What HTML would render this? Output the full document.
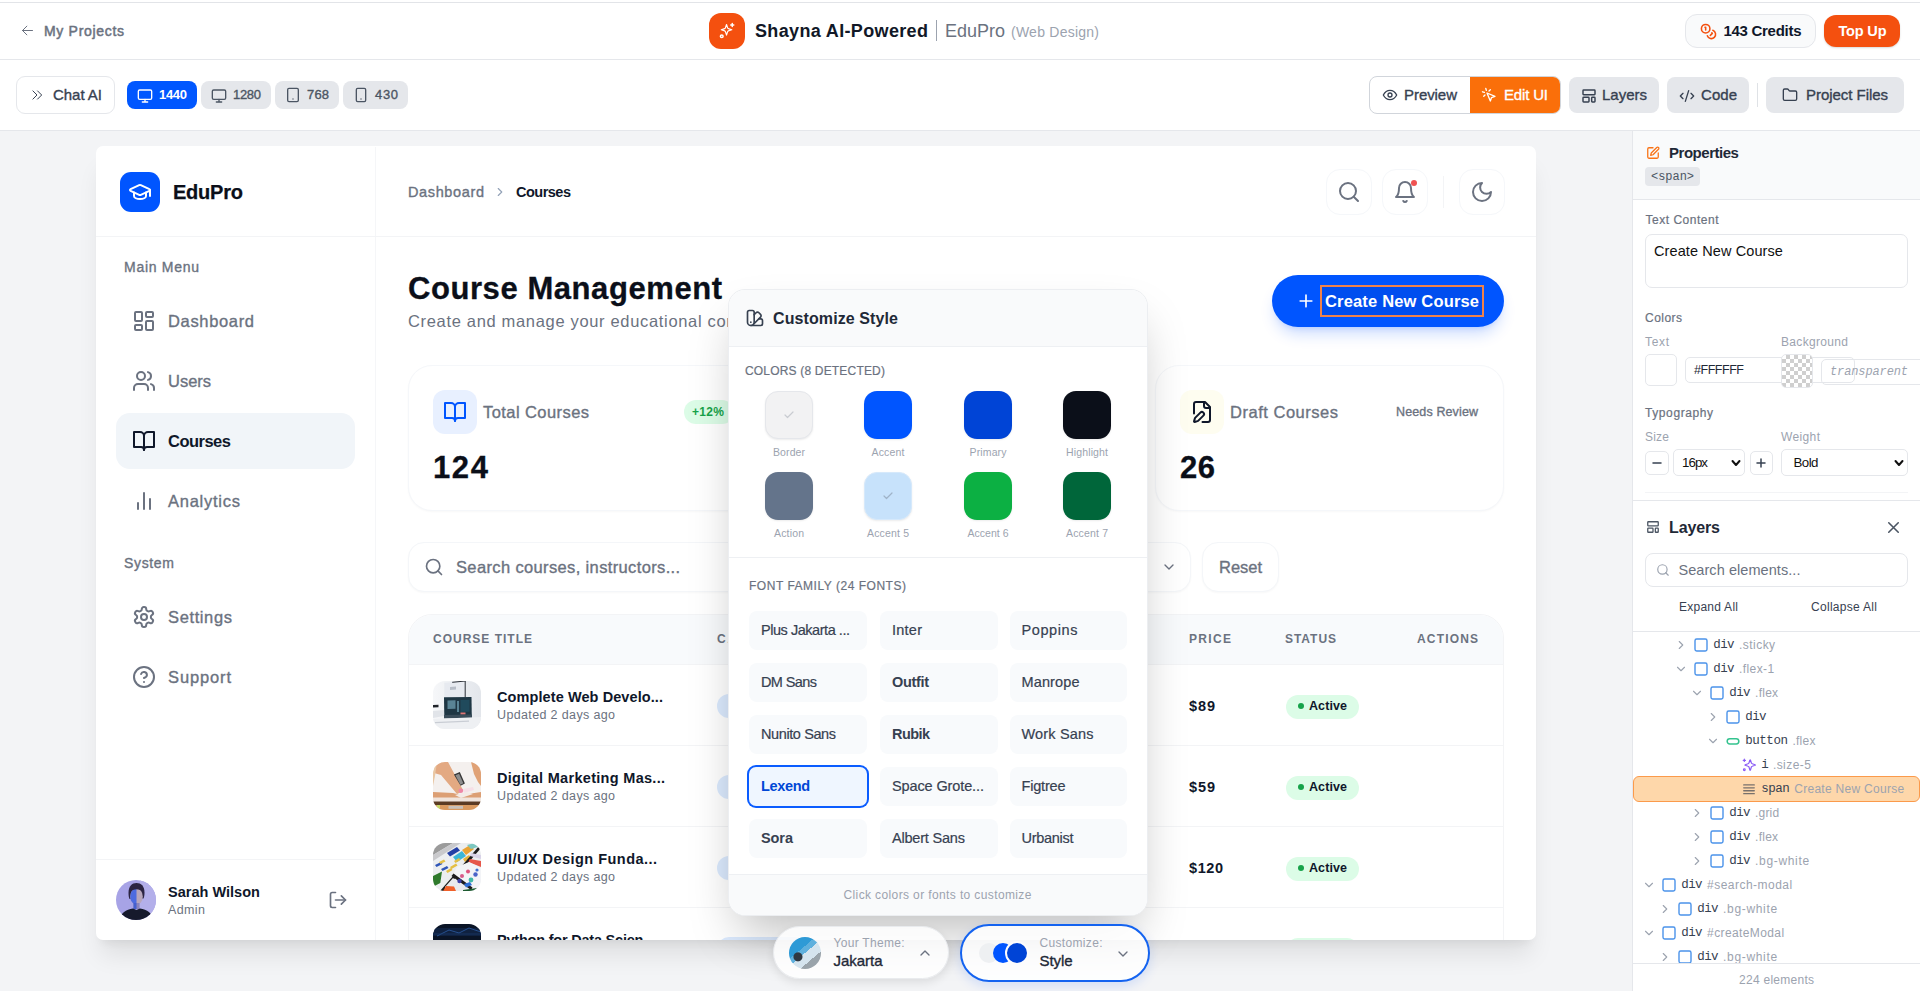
<!DOCTYPE html>
<html lang="en">
<head>
<meta charset="utf-8">
<title>Shayna AI-Powered | EduPro</title>
<style>
*{box-sizing:border-box;margin:0;padding:0}
html,body{width:1920px;height:991px;overflow:hidden;background:#f3f4f6;font-family:"Liberation Sans",Arial,sans-serif;color:#111827}
body{position:relative}
.abs{position:absolute}
.t{position:absolute;white-space:nowrap;line-height:1;transform:translateY(-50%)}
svg{display:block}
.ic{position:absolute;fill:none;stroke:currentColor;stroke-width:2;stroke-linecap:round;stroke-linejoin:round}
/* ---------- app chrome ---------- */
#hdr{position:absolute;left:0;top:0;width:1920px;height:60px;background:#fff;border-bottom:1px solid #e5e7eb}
#topline{position:absolute;left:0;top:2px;width:1920px;height:1px;background:#e2e4e8}
#tool{position:absolute;left:0;top:60px;width:1920px;height:71px;background:#fff;border-bottom:1px solid #e5e7eb}
.btn{position:absolute;border-radius:8px}
.chip{position:absolute;top:21px;height:28px;border-radius:8px;background:#e5e7eb;color:#374151}
.gbtn{position:absolute;top:17px;height:36px;border-radius:8px;background:#e5e7eb;color:#374151}
/* ---------- canvas ---------- */
#canvas{position:absolute;left:0;top:131px;width:1633px;height:860px;background:#f3f4f6;overflow:hidden}
#frame{position:absolute;left:96px;top:15px;width:1440px;height:794px;background:#fff;border-radius:7px;box-shadow:0 20px 25px -5px rgba(0,0,0,.085),0 8px 10px -6px rgba(0,0,0,.07);overflow:hidden}
/* ---------- right panel ---------- */
#right{position:absolute;left:1632px;top:131px;width:288px;height:860px;background:#fff;border-left:1px solid #e5e7eb;overflow:hidden}

.card{border-radius:24px;border:1px solid #f5f7fa;background:#fff;box-shadow:0 1px 2px rgba(15,23,42,.03)}
.th{font-size:12px;font-weight:bold;color:#6b7280}
.thumb{width:48px;height:48px;border-radius:12px}
.rt{font-size:14.5px;font-weight:bold;color:#0f172a}
.rs{font-size:12.5px;color:#6b7280}
.pr{font-size:14.5px;font-weight:bold;color:#0f172a}
.pill{width:90px;height:24px;border-radius:12px;background:#dbeafe}
.st{width:73px;height:24px;margin-left:1px;margin-top:.5px;border-radius:12px;background:#dcfce7}
.dot{width:6px;height:6px;border-radius:50%;background:#16a34a;margin-top:-1px}
.sa{font-size:12.5px;font-weight:bold;color:#0f172a}

.mono{font-family:"Liberation Mono","DejaVu Sans Mono",monospace}
.lab{font-size:12px;color:#6b7280}
.lab2{font-size:12px;color:#9ca3af}
.sb{border:1px solid #e5e7eb;border-radius:5px;background:#fff}
.m{-webkit-text-stroke:.35px currentColor}
.m2{-webkit-text-stroke:.2px currentColor}
</style>
</head>
<body>
<!-- ================= HEADER ================= -->
<div id="hdr">
  <svg class="ic" style="left:20px;top:23px;color:#6b7280;stroke-width:1.6" width="15" height="15" viewBox="0 0 24 24"><path d="M20 12H4M11 5l-7 7 7 7"/></svg>
  <span class="t" style="left:44px;top:31px;font-size:14px;color:#6b7280;-webkit-text-stroke:.5px #6b7280;letter-spacing:0.69px;/*f*/--w:80">My Projects</span>

  <div class="abs" style="left:709px;top:13px;width:36px;height:36px;border-radius:12px;background:#f4500f"></div>
  <svg class="ic" style="left:718px;top:22px;color:#fff;stroke-width:2" width="18" height="18" viewBox="0 0 24 24"><path d="M12 3l1.9 5.8a2 2 0 0 0 1.3 1.3L21 12l-5.8 1.9a2 2 0 0 0-1.3 1.3L12 21l-1.9-5.8a2 2 0 0 0-1.3-1.3L3 12l5.8-1.9a2 2 0 0 0 1.3-1.3z" transform="translate(2 1) scale(.78)"/><path d="M19 2v4M17 4h4"/><circle cx="5" cy="19" r="1.8"/></svg>
  <span class="t" style="left:755px;top:31px;font-size:18px;font-weight:bold;color:#111827;letter-spacing:0.35px;/*f*/--w:173">Shayna AI-Powered</span>
  <div class="abs" style="left:936px;top:20px;width:1px;height:21px;background:#9ca3af"></div>
  <span class="t" style="left:945px;top:31px;font-size:18px;color:#6b7280;letter-spacing:-0.01px;/*f*/--w:60">EduPro</span>
  <span class="t" style="left:1011px;top:32px;font-size:14px;color:#9ca3af;letter-spacing:0.24px;/*f*/--w:88">(Web Design)</span>

  <div class="abs" style="left:1685px;top:14px;width:131px;height:34px;border-radius:12px;background:#f9fafb;border:1px solid #e5e7eb"></div>
  <svg class="ic" style="left:1699.5px;top:22.5px;color:#f4500f;stroke-width:2.2" width="17" height="17" viewBox="0 0 24 24"><circle cx="8" cy="8" r="6"/><path d="M18.09 10.37A6 6 0 1 1 10.34 18"/><path d="M7 6h1v4"/><path d="M16.71 13.88l.7.71-2.82 2.82"/></svg>
  <span class="t" style="left:1723.5px;top:30.4px;font-size:15px;font-weight:bold;color:#0f172a;letter-spacing:-0.29px;/*f*/--w:78">143 Credits</span>
  <div class="abs" style="left:1824px;top:15px;width:76px;height:32px;border-radius:12px;background:#f4500f;box-shadow:0 1px 2px rgba(0,0,0,.15)"></div>
  <span class="t" style="left:1838.5px;top:30.5px;font-size:14.5px;font-weight:bold;color:#fff;letter-spacing:-0.17px;/*f*/--w:48">Top Up</span>
</div>
<div id="topline"></div>

<!-- ================= TOOLBAR ================= -->
<div id="tool">
  <div class="btn" style="left:16px;top:16px;width:99px;height:38px;border:1px solid #e5e7eb;border-radius:9px;background:#fff"></div>
  <svg class="ic" style="left:30px;top:28px;color:#374151;stroke-width:1.7" width="14" height="14" viewBox="0 0 24 24"><path d="M5 5l7 7-7 7M13 5l7 7-7 7"/></svg>
  <span class="t m" style="left:53px;top:34.2px;font-size:15px;color:#374151;letter-spacing:-0.03px;/*f*/--w:49">Chat AI</span>

  <div class="chip" style="left:127px;width:70px;background:#0057ff"></div>
  <svg class="ic" style="left:136.5px;top:27.5px;color:#fff;stroke-width:2" width="16" height="16" viewBox="0 0 24 24"><rect x="2" y="3" width="20" height="14" rx="2"/><path d="M8 21h8M12 17v4"/></svg>
  <span class="t" style="left:159px;top:34.2px;font-size:13px;color:#fff;font-weight:bold;letter-spacing:-0.31px;/*f*/--w:28">1440</span>

  <div class="chip" style="left:201px;width:70px"></div>
  <svg class="ic" style="left:210.5px;top:27.5px;color:#4b5563;stroke-width:2" width="16" height="16" viewBox="0 0 24 24"><rect x="2" y="3" width="20" height="14" rx="2"/><path d="M8 21h8M12 17v4"/></svg>
  <span class="t m" style="left:233px;top:34.2px;font-size:13px;color:#4b5563;letter-spacing:-0.31px;/*f*/--w:28">1280</span>

  <div class="chip" style="left:275px;width:64px"></div>
  <svg class="ic" style="left:285px;top:27px;color:#4b5563;stroke-width:2" width="16" height="16" viewBox="0 0 24 24"><rect x="4" y="2" width="16" height="20" rx="2"/><path d="M12 18h.01"/></svg>
  <span class="t m" style="left:307px;top:34.2px;font-size:13px;color:#4b5563;letter-spacing:0.15px;/*f*/--w:22">768</span>

  <div class="chip" style="left:343px;width:65px"></div>
  <svg class="ic" style="left:353px;top:27px;color:#4b5563;stroke-width:2" width="16" height="16" viewBox="0 0 24 24"><rect x="5" y="2" width="14" height="20" rx="2"/><path d="M12 18h.01"/></svg>
  <span class="t m" style="left:375px;top:34.2px;font-size:13px;color:#4b5563;letter-spacing:0.65px;/*f*/--w:23">430</span>

  <!-- preview / edit -->
  <div class="abs" style="left:1369px;top:16px;width:192px;height:38px;border:1px solid #d1d5db;border-radius:8px;background:#fff;overflow:hidden">
    <div class="abs" style="left:100px;top:-1px;width:91px;height:38px;background:#fa6f0a"></div>
  </div>
  <svg class="ic" style="left:1382px;top:27px;color:#374151;stroke-width:2" width="16" height="16" viewBox="0 0 24 24"><path d="M2 12s3.6-7 10-7 10 7 10 7-3.6 7-10 7S2 12 2 12z"/><circle cx="12" cy="12" r="3"/></svg>
  <span class="t m" style="left:1404px;top:34.2px;font-size:15px;color:#374151;letter-spacing:-0.06px;/*f*/--w:53">Preview</span>
  <svg class="ic" style="left:1481px;top:27px;color:#fff;stroke-width:2" width="16" height="16" viewBox="0 0 24 24"><path d="M9 9l5 12 1.8-5.2L21 14zM7.2 2.2L8 5.1M5.1 8l-2.9-.8M14 4.1L12 6M6 12l-1.9 2"/></svg>
  <span class="t m" style="left:1504px;top:34.2px;font-size:15px;color:#fff;letter-spacing:-0.17px;/*f*/--w:44">Edit UI</span>

  <div class="gbtn" style="left:1569px;width:90px"></div>
  <svg class="ic" style="left:1580.5px;top:27.5px;color:#374151;stroke-width:2.2" width="16" height="16" viewBox="0 0 24 24"><rect x="3" y="3" width="18" height="7" rx="1"/><rect x="3" y="14" width="9" height="7" rx="1"/><rect x="16" y="14" width="5" height="7" rx="1"/></svg>
  <span class="t m" style="left:1602px;top:34.2px;font-size:15px;color:#374151;letter-spacing:-0.01px;/*f*/--w:45">Layers</span>

  <div class="gbtn" style="left:1667px;width:82px"></div>
  <svg class="ic" style="left:1678.5px;top:27.5px;color:#374151;stroke-width:2" width="16" height="16" viewBox="0 0 24 24"><path d="M18 16l4-4-4-4M6 8l-4 4 4 4M14.5 4l-5 16"/></svg>
  <span class="t m" style="left:1701px;top:34.2px;font-size:15px;color:#374151;letter-spacing:0.05px;/*f*/--w:36">Code</span>

  <div class="abs" style="left:1757px;top:23px;width:1px;height:24px;background:#dfe2e6"></div>

  <div class="gbtn" style="left:1766px;width:138px"></div>
  <svg class="ic" style="left:1782px;top:27px;color:#374151;stroke-width:2" width="16" height="16" viewBox="0 0 24 24"><path d="M20 20a2 2 0 0 0 2-2V8a2 2 0 0 0-2-2h-7.9a2 2 0 0 1-1.7-.9L9.6 3.9A2 2 0 0 0 7.9 3H4a2 2 0 0 0-2 2v13a2 2 0 0 0 2 2z"/></svg>
  <span class="t m" style="left:1806px;top:34.2px;font-size:15px;color:#374151;letter-spacing:-0.04px;/*f*/--w:82">Project Files</span>
</div>

<!-- ================= CANVAS ================= -->
<div id="canvas">
  <div id="frame">
  <div class="abs" id="fo" style="left:-96px;top:-146px;width:1920px;height:991px;font-family:'Liberation Sans',Arial,sans-serif">
    <!-- sidebar -->
    <div class="abs" style="left:375px;top:147px;width:1px;height:800px;background:#f5f6f8"></div>
    <div class="abs" style="left:96px;top:236px;width:1440px;height:1px;background:#f3f4f6"></div>
    <div class="abs" style="left:120px;top:172px;width:40px;height:40px;border-radius:11px;background:#0055ff"></div>
    <svg class="ic" style="left:128px;top:180px;color:#fff;stroke-width:2" width="24" height="24" viewBox="0 0 24 24"><path d="M21.42 10.922a1 1 0 0 0-.019-1.838L12.83 5.18a2 2 0 0 0-1.66 0L2.6 9.08a1 1 0 0 0 0 1.832l8.57 3.908a2 2 0 0 0 1.66 0z"/><path d="M22 10v6"/><path d="M6 12.5V16a6 3 0 0 0 12 0v-3.5"/></svg>
    <span class="t" style="left:173px;top:192px;font-size:20px;font-weight:bold;color:#0b0f19;-webkit-text-stroke:.25px #0b0f19;letter-spacing:-0.23px;/*f*/--w:70">EduPro</span>

    <span class="t m" style="left:124px;top:267px;font-size:14px;color:#6b7280;letter-spacing:0.72px;/*f*/--w:75">Main Menu</span>

    <svg class="ic" style="left:132px;top:309px;color:#6b7280" width="24" height="24" viewBox="0 0 24 24"><rect x="3" y="3" width="7" height="9" rx="1"/><rect x="14" y="3" width="7" height="5" rx="1"/><rect x="14" y="12" width="7" height="9" rx="1"/><rect x="3" y="16" width="7" height="5" rx="1"/></svg>
    <span class="t m" style="left:168px;top:321px;font-size:16.5px;color:#6b7280;letter-spacing:0.66px;/*f*/--w:86">Dashboard</span>

    <svg class="ic" style="left:132px;top:369px;color:#6b7280" width="24" height="24" viewBox="0 0 24 24"><path d="M16 21v-2a4 4 0 0 0-4-4H6a4 4 0 0 0-4 4v2"/><circle cx="9" cy="7" r="4"/><path d="M22 21v-2a4 4 0 0 0-3-3.87"/><path d="M16 3.13a4 4 0 0 1 0 7.75"/></svg>
    <span class="t m" style="left:168px;top:381px;font-size:16.5px;color:#6b7280;letter-spacing:-0.02px;/*f*/--w:43">Users</span>

    <div class="abs" style="left:116px;top:413px;width:239px;height:56px;border-radius:14px;background:#f1f5f9"></div>
    <svg class="ic" style="left:132px;top:429px;color:#0f172a" width="24" height="24" viewBox="0 0 24 24"><path d="M2 3h6a4 4 0 0 1 4 4v14a3 3 0 0 0-3-3H2z"/><path d="M22 3h-6a4 4 0 0 0-4 4v14a3 3 0 0 1 3-3h7z"/></svg>
    <span class="t" style="left:168px;top:441px;font-size:16.5px;font-weight:bold;color:#0f172a;letter-spacing:-0.51px;/*f*/--w:63">Courses</span>

    <svg class="ic" style="left:132px;top:489px;color:#6b7280" width="24" height="24" viewBox="0 0 24 24"><path d="M18 20V10M12 20V4M6 20v-6"/></svg>
    <span class="t m" style="left:168px;top:501px;font-size:16.5px;color:#6b7280;letter-spacing:0.75px;/*f*/--w:72">Analytics</span>

    <span class="t m" style="left:124px;top:563px;font-size:14px;color:#6b7280;letter-spacing:0.66px;/*f*/--w:50">System</span>

    <svg class="ic" style="left:132px;top:605px;color:#6b7280" width="24" height="24" viewBox="0 0 24 24"><path d="M12.22 2h-.44a2 2 0 0 0-2 2v.18a2 2 0 0 1-1 1.73l-.43.25a2 2 0 0 1-2 0l-.15-.08a2 2 0 0 0-2.73.73l-.22.38a2 2 0 0 0 .73 2.73l.15.1a2 2 0 0 1 1 1.72v.51a2 2 0 0 1-1 1.74l-.15.09a2 2 0 0 0-.73 2.73l.22.38a2 2 0 0 0 2.73.73l.15-.08a2 2 0 0 1 2 0l.43.25a2 2 0 0 1 1 1.73V20a2 2 0 0 0 2 2h.44a2 2 0 0 0 2-2v-.18a2 2 0 0 1 1-1.73l.43-.25a2 2 0 0 1 2 0l.15.08a2 2 0 0 0 2.73-.73l.22-.39a2 2 0 0 0-.73-2.73l-.15-.08a2 2 0 0 1-1-1.74v-.5a2 2 0 0 1 1-1.74l.15-.09a2 2 0 0 0 .73-2.73l-.22-.38a2 2 0 0 0-2.73-.73l-.15.08a2 2 0 0 1-2 0l-.43-.25a2 2 0 0 1-1-1.73V4a2 2 0 0 0-2-2z"/><circle cx="12" cy="12" r="3"/></svg>
    <span class="t m" style="left:168px;top:617px;font-size:16.5px;color:#6b7280;letter-spacing:0.62px;/*f*/--w:64">Settings</span>

    <svg class="ic" style="left:132px;top:665px;color:#6b7280" width="24" height="24" viewBox="0 0 24 24"><circle cx="12" cy="12" r="10"/><path d="M9.09 9a3 3 0 0 1 5.83 1c0 2-3 3-3 3"/><path d="M12 17h.01"/></svg>
    <span class="t m" style="left:168px;top:677px;font-size:16.5px;color:#6b7280;letter-spacing:0.87px;/*f*/--w:63">Support</span>

    <div class="abs" style="left:96px;top:859px;width:279px;height:1px;background:#f3f4f6"></div>
    <svg class="abs" style="left:116px;top:880px;border-radius:50%;overflow:hidden" width="40" height="40" viewBox="0 0 40 40"><rect width="40" height="40" fill="#a7a3e6"/><path d="M24 0h16v40H24z" fill="#b3afea"/><path d="M12.500 13c0-7 3.500-10 8-10s8 3 8 9.500c0 3-.5 5-1 6l-14 .5c-.6-1.500-1-3.500-1-6z" fill="#2b2443"/><ellipse cx="20.500" cy="16.500" rx="6.300" ry="8.300" fill="#b7a6bb"/><path d="M14.200 16.500a6.300 8.300 0 0 1 6.300-8.300v16.600a6.300 8.300 0 0 1-6.300-8.300z" fill="#4d6be0"/><path d="M14 12c1-3.500 3.500-5 6.500-5s5.500 1.500 6.500 5c-2-2-4-2.800-6.500-2.800S16 10 14 12z" fill="#2b2443"/><path d="M17.500 23h6v6h-6z" fill="#8a83bb"/><path d="M17.500 23h3v6h-3z" fill="#4560cf"/><path d="M4 40c.5-7 6-10.500 13-11.500l3.500 1.500 3.500-1.500c7 1 12.500 4.500 13 11.500z" fill="#161a2c"/></svg>
    <span class="t" style="left:168px;top:892px;font-size:14.5px;font-weight:bold;color:#0f172a;letter-spacing:0.02px;/*f*/--w:92">Sarah Wilson</span>
    <span class="t" style="left:168px;top:910px;font-size:12.5px;color:#6b7280;letter-spacing:0.39px;/*f*/--w:37">Admin</span>
    <svg class="ic" style="left:328px;top:890px;color:#6b7280;stroke-width:2" width="20" height="20" viewBox="0 0 24 24"><path d="M9 21H5a2 2 0 0 1-2-2V5a2 2 0 0 1 2-2h4"/><path d="M16 17l5-5-5-5"/><path d="M21 12H9"/></svg>

    <!-- top bar -->
    <span class="t m" style="left:408px;top:192px;font-size:14.5px;color:#6b7280;letter-spacing:0.63px;/*f*/--w:76">Dashboard</span>
    <svg class="ic" style="left:493px;top:185px;color:#94a3b8;stroke-width:2" width="14" height="14" viewBox="0 0 24 24"><path d="M9 18l6-6-6-6"/></svg>
    <span class="t" style="left:516px;top:192px;font-size:14.5px;font-weight:bold;color:#0f172a;letter-spacing:-0.51px;/*f*/--w:55">Courses</span>

    <div class="abs" style="left:1326px;top:169px;width:46px;height:46px;border-radius:14px;border:1px solid #f5f7fa;background:#fff"></div>
    <svg class="ic" style="left:1337px;top:180px;color:#6b7280" width="24" height="24" viewBox="0 0 24 24"><circle cx="11" cy="11" r="8"/><path d="M21 21l-4.3-4.3"/></svg>
    <div class="abs" style="left:1382px;top:169px;width:46px;height:46px;border-radius:14px;border:1px solid #f5f7fa;background:#fff"></div>
    <svg class="ic" style="left:1393px;top:180px;color:#6b7280" width="24" height="24" viewBox="0 0 24 24"><path d="M6 8a6 6 0 0 1 12 0c0 7 3 9 3 9H3s3-2 3-9"/><path d="M10.3 21a1.94 1.94 0 0 0 3.4 0"/></svg>
    <div class="abs" style="left:1411px;top:180px;width:6px;height:6px;border-radius:50%;background:#f05252"></div>
    <div class="abs" style="left:1443px;top:176px;width:1px;height:32px;background:#f3f4f6"></div>
    <div class="abs" style="left:1459px;top:169px;width:46px;height:46px;border-radius:14px;border:1px solid #f5f7fa;background:#fff"></div>
    <svg class="ic" style="left:1470px;top:180px;color:#6b7280" width="24" height="24" viewBox="0 0 24 24"><path d="M12 3a6 6 0 0 0 9 9 9 9 0 1 1-9-9z"/></svg>

    <!-- heading -->
    <span class="t" style="left:408px;top:288px;font-size:31px;font-weight:bold;color:#0b0f19;-webkit-text-stroke:.3px #0b0f19;letter-spacing:0.57px;/*f*/--w:314">Course Management</span>
    <span class="t" style="left:408px;top:321px;font-size:16.5px;color:#6b7280;letter-spacing:0.67px;/*f*/--w:363">Create and manage your educational content.</span>

    <div class="abs" style="left:1272px;top:275px;width:232px;height:52px;border-radius:26px;background:#0055ff;box-shadow:0 10px 15px -3px rgba(0,85,255,.2),0 4px 6px -4px rgba(0,85,255,.2)"></div>
    <svg class="ic" style="left:1296px;top:291px;color:#fff;stroke-width:2" width="20" height="20" viewBox="0 0 24 24"><path d="M5 12h14M12 5v14"/></svg>
    <div class="abs" style="left:1320px;top:285px;width:164px;height:32px;border:2px solid #f0824a;background:rgba(0,30,120,.12)"></div>
    <span class="t" style="left:1325px;top:301px;font-size:16.5px;font-weight:bold;color:#fff;letter-spacing:0.17px;/*f*/--w:154">Create New Course</span>

    <!-- stat cards -->
    <div class="abs card" style="left:408px;top:365px;width:349px;height:146px"></div>
    <div class="abs card" style="left:781px;top:365px;width:349px;height:146px"></div>
    <div class="abs card" style="left:1155px;top:365px;width:349px;height:146px"></div>

    <div class="abs" style="left:433px;top:390px;width:44px;height:44px;border-radius:12px;background:#e8f0ff"></div>
    <svg class="ic" style="left:443px;top:400px;color:#0055ff" width="24" height="24" viewBox="0 0 24 24"><path d="M2 3h6a4 4 0 0 1 4 4v14a3 3 0 0 0-3-3H2z"/><path d="M22 3h-6a4 4 0 0 0-4 4v14a3 3 0 0 1 3-3h7z"/></svg>
    <span class="t m" style="left:483px;top:412px;font-size:16.5px;color:#6b7280;letter-spacing:0.43px;/*f*/--w:106">Total Courses</span>
    <div class="abs" style="left:684px;top:400px;width:50px;height:24px;border-radius:12px;background:#dcfce7"></div>
    <span class="t" style="left:692px;top:412px;font-size:12px;font-weight:bold;color:#16a34a;letter-spacing:0.32px;/*f*/--w:32">+12%</span>
    <span class="t" style="left:433px;top:467px;font-size:31px;font-weight:bold;color:#0b0f19;-webkit-text-stroke:.3px #0b0f19;letter-spacing:1.63px;/*f*/--w:55">124</span>

    <div class="abs" style="left:1180px;top:390px;width:44px;height:44px;border-radius:12px;background:#fefdf0"></div>
    <svg class="ic" style="left:1190px;top:400px;color:#0f172a" width="24" height="24" viewBox="0 0 24 24"><path d="M12.5 22H18a2 2 0 0 0 2-2V7l-5-5H6a2 2 0 0 0-2 2v9.5"/><path d="M14 2v4a2 2 0 0 0 2 2h4"/><path d="M13.378 15.626a1 1 0 1 0-3.004-3.004l-5.01 5.012a2 2 0 0 0-.506.854l-.837 2.87a.5.5 0 0 0 .62.62l2.87-.837a2 2 0 0 0 .854-.506z"/></svg>
    <span class="t m" style="left:1230px;top:412px;font-size:16.5px;color:#6b7280;letter-spacing:0.52px;/*f*/--w:108">Draft Courses</span>
    <span class="t m" style="left:1396px;top:412px;font-size:12.5px;color:#6b7280;letter-spacing:0.13px;/*f*/--w:82">Needs Review</span>
    <span class="t" style="left:1180px;top:467px;font-size:31px;font-weight:bold;color:#0b0f19;-webkit-text-stroke:.3px #0b0f19;letter-spacing:0.52px;/*f*/--w:35">26</span>

    <!-- filters -->
    <div class="abs" style="left:408px;top:542px;width:540px;height:50px;border-radius:16px;border:1px solid #f4f6f9;box-shadow:0 1px 2px rgba(15,23,42,.03);background:#fff"></div>
    <svg class="ic" style="left:424px;top:557px;color:#6b7280;stroke-width:2" width="20" height="20" viewBox="0 0 24 24"><circle cx="11" cy="11" r="8"/><path d="M21 21l-4.3-4.3"/></svg>
    <span class="t m" style="left:456px;top:567px;font-size:16.5px;color:#6b7280;letter-spacing:0.36px;/*f*/--w:224">Search courses, instructors...</span>
    <div class="abs" style="left:960px;top:542px;width:231px;height:50px;border-radius:16px;border:1px solid #f4f6f9;box-shadow:0 1px 2px rgba(15,23,42,.03);background:#fff"></div>
    <svg class="ic" style="left:1161px;top:559px;color:#6b7280;stroke-width:2" width="16" height="16" viewBox="0 0 24 24"><path d="M6 9l6 6 6-6"/></svg>
    <div class="abs" style="left:1202px;top:542px;width:77px;height:50px;border-radius:16px;border:1px solid #f4f6f9;box-shadow:0 1px 2px rgba(15,23,42,.03);background:#fff"></div>
    <span class="t m" style="left:1219px;top:567px;font-size:16.5px;color:#6b7280;letter-spacing:-0.03px;/*f*/--w:43">Reset</span>

    <!-- table -->
    <div class="abs" style="left:408px;top:614px;width:1096px;height:400px;border-radius:24px 24px 0 0;border:1px solid #f3f4f6;background:#fff;overflow:hidden">
      <div class="abs" style="left:0;top:0;width:1096px;height:50px;background:#f8fafc;border-bottom:1px solid #f3f4f6"></div>
      <div class="abs" style="left:0;top:130px;width:1096px;height:1px;background:#f3f4f6"></div>
      <div class="abs" style="left:0;top:211px;width:1096px;height:1px;background:#f3f4f6"></div>
      <div class="abs" style="left:0;top:292px;width:1096px;height:1px;background:#f3f4f6"></div>
    </div>
    <span class="t th" style="left:433px;top:639px;letter-spacing:1.0px;/*f*/--w:99">COURSE TITLE</span>
    <span class="t th" style="left:717px;top:639px;letter-spacing:1.9px;/*f*/--w:80">CATEGORY</span>
    <span class="t th" style="left:1189px;top:639px;letter-spacing:1.33px;/*f*/--w:42">PRICE</span>
    <span class="t th" style="left:1285px;top:639px;letter-spacing:0.96px;/*f*/--w:51">STATUS</span>
    <span class="t th" style="left:1417px;top:639px;letter-spacing:1.17px;/*f*/--w:61">ACTIONS</span>

    <!-- row 1 -->
    <svg class="abs" style="left:433px;top:681px;border-radius:12px;overflow:hidden" width="48" height="48" viewBox="0 0 48 48"><defs><linearGradient id="g1" x1="0" x2="1"><stop offset="0" stop-color="#f6f7f9"/><stop offset="1" stop-color="#e3e6eb"/></linearGradient></defs><rect width="48" height="48" fill="url(#g1)"/><path d="M11.300 1.800L32.200 .5V16.500H11.300z" fill="#e7eaf0"/><path d="M19.200 1.300L32.500 0M32.200 0v16.500" stroke="#2a2f36" stroke-width="1" fill="none"/><path d="M17 6l6-.5v3l-6 .5z" fill="#b8bec8"/><path d="M11 16.300l27.500-.3.300 20.500-27.500.5z" fill="#1f3744"/><path d="M14.500 19.500l8-.2v8.500l-8 .3zM24 20l2-.1V31l-2 .1z" fill="#6f9fb0" opacity=".75"/><path d="M27.500 19l9-.2v12l-9 .3z" fill="#204a5c"/><rect x="27.500" y="31.500" width="5" height="2" fill="#d77"/><path d="M11 34l28-.5v3.500l-28 .5z" fill="#3a4d5a"/><path d="M0 24l5.500-.3v2.500L0 26.500z" fill="#20242a"/><path d="M0 30l11-1v6L0 37z" fill="#e1e4e9"/><path d="M0 38l48-2v12H0z" fill="#eef0f3"/><path d="M2 41l34-1.500v1.200L2 42.200z" fill="#c9cdd4"/></svg>
    <span class="t rt" style="left:497px;top:697px;letter-spacing:0.09px;/*f*/--w:166">Complete Web Develo...</span>
    <span class="t rs" style="left:497px;top:715px;letter-spacing:0.36px;/*f*/--w:118">Updated 2 days ago</span>
    <div class="abs pill" style="left:717px;top:694px"></div>
    <span class="t pr" style="left:1189px;top:706px;letter-spacing:0.9px;/*f*/--w:26">$89</span>
    <div class="abs st" style="left:1285px;top:694px"></div><div class="abs dot" style="left:1298px;top:704px"></div>
    <span class="t sa" style="left:1309px;top:706px;letter-spacing:0.09px;/*f*/--w:38">Active</span>
    <!-- row 2 -->
    <svg class="abs" style="left:433px;top:762px;border-radius:12px;overflow:hidden" width="48" height="48" viewBox="0 0 48 48"><rect width="48" height="48" fill="#f4f0ee"/><path d="M2 0h13l15.500 29-6.500 3L8 13 1 11z" fill="#e3a982"/><path d="M0 0h4L2 14 0 24z" fill="#e9c7a4"/><path d="M38 0h10v24l-3-4-4-8z" fill="#e0a276"/><path d="M20.900 12.400l5.900-2.300 5.100 11.300-4.300 2.300z" fill="#353535"/><path d="M22.400 13.200l3.700-1.400 4.200 9.400-2.900 1.500z" fill="#8d8d8d"/><circle cx="27.800" cy="28.800" r="2.300" fill="#ee86a6"/><path d="M30 27l10-2 1 3-10 3z" fill="#f6dfe6"/><path d="M0 30l20 1 8 2 20-3v6H0z" fill="#dc9f74"/><path d="M22 33l12-3 6 2-12 4z" fill="#f3ebe6"/><rect x="0" y="35.500" width="48" height="4" fill="#f0e4dc"/><rect x="0" y="39.500" width="48" height="3.500" fill="#5b3b24"/><rect x="0" y="43" width="48" height="5" fill="#d9995f"/><rect x="15.500" y="43.800" width="14.500" height="3" fill="#c9c1ba"/><rect x="4" y="43" width="3" height="4" fill="#c8d86a"/></svg>
    <span class="t rt" style="left:497px;top:778px;letter-spacing:0.3px;/*f*/--w:168">Digital Marketing Mas...</span>
    <span class="t rs" style="left:497px;top:796px;letter-spacing:0.36px;/*f*/--w:118">Updated 2 days ago</span>
    <div class="abs pill" style="left:717px;top:775px"></div>
    <span class="t pr" style="left:1189px;top:787px;letter-spacing:0.9px;/*f*/--w:26">$59</span>
    <div class="abs st" style="left:1285px;top:775px"></div><div class="abs dot" style="left:1298px;top:785px"></div>
    <span class="t sa" style="left:1309px;top:787px;letter-spacing:0.09px;/*f*/--w:38">Active</span>
    <!-- row 3 -->
    <svg class="abs" style="left:433px;top:843px;border-radius:12px;overflow:hidden" width="48" height="48" viewBox="0 0 48 48"><rect width="48" height="48" fill="#eceef0"/><path d="M0 0h20L0 12z" fill="#9b9b9b"/><path d="M0 12L20 0h8L0 18z" fill="#c9c9cc"/><path d="M14 10l10-6 3 3.500-10 6z" fill="#2440a6"/><path d="M20 14l9-6 4 5-9 6z" fill="#3bb6d6"/><path d="M29 7l8-5 4 4-8 6z" fill="#e9a233"/><path d="M34 2l8-2h6v3l-10 3z" fill="#7cc7c0"/><path d="M30 16l6-4 2 3-6 4z" fill="#e2b23c"/><path d="M2 22l6-3 1.500 2-6 3zM8 26l6-3 1.500 2-6 3z" fill="#2f56b8"/><path d="M6 19l5-2.500 1.500 2-5 2.500zM17 24l6-3.500 1.500 2-6 3.500zM13 28l5-3 1.500 2-5 3zM21 18l5-3 1.500 2-5 3z" fill="#e4bf45"/><path d="M0 33l9-4.500-1.700 11.500L1.500 43 0 44z" fill="#2f7a2c"/><path d="M46.500 2.500L48 5 11 48H7z" fill="#1c1c1e"/><path d="M36.700 16l11.300 2v6l-12.500-5z" fill="#e6574a"/><path d="M38 10l10 2v4l-11-3z" fill="#d9d3e8"/><path d="M24 24l12-5 12 6v18l-8 3-20-14z" fill="#f3f4f7"/><path d="M20.500 30.500l19 14-1.500 2.500-19.500-14z" fill="#1c1c1e"/><path d="M12 44l8-9 16 12H12z" fill="#e9ebee"/><circle cx="35" cy="28.500" r="2" fill="#e0527e"/><circle cx="29" cy="33" r="2" fill="#d85a8a"/><circle cx="42.500" cy="31.500" r="2.200" fill="#4a63c8"/><circle cx="26.500" cy="38" r="2.200" fill="#3b3fa8"/><circle cx="38" cy="37" r="2.400" fill="#3fb8a8"/><circle cx="44" cy="27" r="1.600" fill="#3f6fd0"/><path d="M31 41l6-2 2 3-6 2.500z" fill="#2f6fd6"/><path d="M13 43l8 .5 2 4.500H10z" fill="#f0602a"/><path d="M30 47l14-2 2 3H30z" fill="#1d5a30"/></svg>
    <span class="t rt" style="left:497px;top:859px;letter-spacing:0.47px;/*f*/--w:160">UI/UX Design Funda...</span>
    <span class="t rs" style="left:497px;top:877px;letter-spacing:0.36px;/*f*/--w:118">Updated 2 days ago</span>
    <div class="abs pill" style="left:717px;top:856px"></div>
    <span class="t pr" style="left:1189px;top:868px;letter-spacing:0.58px;/*f*/--w:34">$120</span>
    <div class="abs st" style="left:1285px;top:856px"></div><div class="abs dot" style="left:1298px;top:866px"></div>
    <span class="t sa" style="left:1309px;top:868px;letter-spacing:0.09px;/*f*/--w:38">Active</span>
    <!-- row 4 -->
    <svg class="abs" style="left:433px;top:924px;border-radius:12px;overflow:hidden" width="48" height="48" viewBox="0 0 48 48"><rect width="48" height="48" fill="#0a1426"/><path d="M0 4h48v8H0z" fill="#0f2140"/><path d="M4 12l12-6 10 3 10-5 12 4" fill="none" stroke="#27508f" stroke-width="1"/><path d="M0 10h48" stroke="#1b3a6b" stroke-width=".8"/></svg>
    <span class="t rt" style="left:497px;top:940px;letter-spacing:-0.21px;/*f*/--w:158">Python for Data Scien...</span>
    <div class="abs pill" style="left:717px;top:937px"></div>
    <div class="abs st" style="left:1285px;top:937px"></div>
  </div>
  </div>
<!--OVS-->
<div class="abs" style="left:0;top:-131px;width:1920px;height:991px">
<div class="abs" style="left:728px;top:289px;width:420px;height:627px;border-radius:17px;background:#fff;border:1px solid #eceef1;box-shadow:0 25px 50px -12px rgba(0,0,0,.27);overflow:hidden">
<div class="abs" style="left:0;top:0;width:418px;height:57px;background:#f9fafb;border-bottom:1px solid #eef0f3"></div>
<div class="abs" style="left:0;top:267px;width:418px;height:1px;background:#eef0f3"></div>
<div class="abs" style="left:0;top:584px;width:418px;height:41px;background:#f9fafb;border-top:1px solid #eef0f3"></div>
</div>
<svg class="ic" style="left:745px;top:308px;color:#374151;stroke-width:2" width="20" height="20" viewBox="0 0 24 24"><path d="M11 17a4 4 0 0 1-8 0V5a2 2 0 0 1 2-2h4a2 2 0 0 1 2 2z"/><path d="M16.7 13H19a2 2 0 0 1 2 2v4a2 2 0 0 1-2 2H7"/><path d="M7 17h.01"/><path d="M11 8l2.3-2.3a2.4 2.4 0 0 1 3.404.004L18.6 7.6a2.4 2.4 0 0 1 .026 3.434L9.9 19.8"/></svg>
<span class="t" style="left:773px;top:318.5px;font-size:16px;font-weight:bold;color:#1f2937;letter-spacing:0.1px;/*f*/--w:125">Customize Style</span>
<span class="t m2" style="left:745px;top:371px;font-size:12px;color:#6b7280;letter-spacing:0.18px;/*f*/--w:140">COLORS (8 DETECTED)</span>
<div class="abs" style="left:765px;top:391px;width:48px;height:48px;border-radius:13px;background:#f2f2f3;border:1px solid #e5e7eb;box-shadow:0 1px 2px rgba(0,0,0,.08)"></div>
<svg class="ic" style="left:783px;top:409px;color:#c9ccd1;stroke-width:2.4" width="12" height="12" viewBox="0 0 24 24"><path d="M20 6L9 17l-5-5"/></svg>
<span class="t" style="left:773.0px;top:451.6px;font-size:10.5px;color:#9ca3af;letter-spacing:0.1px;/*f*/--w:32">Border</span>
<div class="abs" style="left:864px;top:391px;width:48px;height:48px;border-radius:13px;background:#0055ff;box-shadow:0 1px 2px rgba(0,0,0,.08)"></div>
<span class="t" style="left:871.5px;top:451.6px;font-size:10.5px;color:#9ca3af;letter-spacing:0.18px;/*f*/--w:33">Accent</span>
<div class="abs" style="left:964px;top:391px;width:48px;height:48px;border-radius:13px;background:#0044d6;box-shadow:0 1px 2px rgba(0,0,0,.08)"></div>
<span class="t" style="left:969.5px;top:451.6px;font-size:10.5px;color:#9ca3af;letter-spacing:0.14px;/*f*/--w:37">Primary</span>
<div class="abs" style="left:1063px;top:391px;width:48px;height:48px;border-radius:13px;background:#0b0f19;box-shadow:0 1px 2px rgba(0,0,0,.08)"></div>
<span class="t" style="left:1066.0px;top:451.6px;font-size:10.5px;color:#9ca3af;letter-spacing:0.14px;/*f*/--w:42">Highlight</span>
<div class="abs" style="left:765px;top:472px;width:48px;height:48px;border-radius:13px;background:#64748b;box-shadow:0 1px 2px rgba(0,0,0,.08)"></div>
<span class="t" style="left:774.0px;top:532.6px;font-size:10.5px;color:#9ca3af;letter-spacing:0.16px;/*f*/--w:30">Action</span>
<div class="abs" style="left:864px;top:472px;width:48px;height:48px;border-radius:13px;background:#c7e2fb;border:1px solid #d6e9fb;box-shadow:0 1px 2px rgba(0,0,0,.08)"></div>
<svg class="ic" style="left:882px;top:490px;color:#9fb3c8;stroke-width:2.4" width="12" height="12" viewBox="0 0 24 24"><path d="M20 6L9 17l-5-5"/></svg>
<span class="t" style="left:867.0px;top:532.6px;font-size:10.5px;color:#9ca3af;letter-spacing:0.16px;/*f*/--w:42">Accent 5</span>
<div class="abs" style="left:964px;top:472px;width:48px;height:48px;border-radius:13px;background:#0cb043;box-shadow:0 1px 2px rgba(0,0,0,.08)"></div>
<span class="t" style="left:967.5px;top:532.6px;font-size:10.5px;color:#9ca3af;letter-spacing:0.02px;/*f*/--w:41">Accent 6</span>
<div class="abs" style="left:1063px;top:472px;width:48px;height:48px;border-radius:13px;background:#00663a;box-shadow:0 1px 2px rgba(0,0,0,.08)"></div>
<span class="t" style="left:1066.0px;top:532.6px;font-size:10.5px;color:#9ca3af;letter-spacing:0.16px;/*f*/--w:42">Accent 7</span>
<span class="t m2" style="left:749px;top:586px;font-size:12px;color:#6b7280;letter-spacing:0.52px;/*f*/--w:157">FONT FAMILY (24 FONTS)</span>
<div class="abs" style="left:749px;top:610.5px;width:117.5px;height:39px;border-radius:8px;background:#f8fafc"></div>
<span class="t m2" style="left:761px;top:629.5px;font-size:14.5px;color:#374151;letter-spacing:-0.46px;/*f*/--w:89">Plus Jakarta ...</span>
<div class="abs" style="left:880px;top:610.5px;width:117.5px;height:39px;border-radius:8px;background:#f8fafc"></div>
<span class="t m2" style="left:892px;top:629.5px;font-size:14.5px;color:#374151;letter-spacing:0.25px;/*f*/--w:30">Inter</span>
<div class="abs" style="left:1009.5px;top:610.5px;width:117.5px;height:39px;border-radius:8px;background:#f8fafc"></div>
<span class="t m2" style="left:1021.5px;top:629.5px;font-size:14.5px;color:#374151;letter-spacing:0.6px;/*f*/--w:56">Poppins</span>
<div class="abs" style="left:749px;top:662.5px;width:117.5px;height:39px;border-radius:8px;background:#f8fafc"></div>
<span class="t m2" style="left:761px;top:681.5px;font-size:14.5px;color:#374151;letter-spacing:-0.61px;/*f*/--w:56">DM Sans</span>
<div class="abs" style="left:880px;top:662.5px;width:117.5px;height:39px;border-radius:8px;background:#f8fafc"></div>
<span class="t" style="left:892px;top:681.5px;font-size:14.5px;font-weight:bold;color:#374151;letter-spacing:-0.33px;/*f*/--w:37">Outfit</span>
<div class="abs" style="left:1009.5px;top:662.5px;width:117.5px;height:39px;border-radius:8px;background:#f8fafc"></div>
<span class="t m2" style="left:1021.5px;top:681.5px;font-size:14.5px;color:#374151;letter-spacing:0.13px;/*f*/--w:58">Manrope</span>
<div class="abs" style="left:749px;top:714.5px;width:117.5px;height:39px;border-radius:8px;background:#f8fafc"></div>
<span class="t m2" style="left:761px;top:733.5px;font-size:14.5px;color:#374151;letter-spacing:-0.4px;/*f*/--w:75">Nunito Sans</span>
<div class="abs" style="left:880px;top:714.5px;width:117.5px;height:39px;border-radius:8px;background:#f8fafc"></div>
<span class="t" style="left:892px;top:733.5px;font-size:14.5px;font-weight:bold;color:#374151;letter-spacing:-0.57px;/*f*/--w:38">Rubik</span>
<div class="abs" style="left:1009.5px;top:714.5px;width:117.5px;height:39px;border-radius:8px;background:#f8fafc"></div>
<span class="t m2" style="left:1021.5px;top:733.5px;font-size:14.5px;color:#374151;letter-spacing:0.17px;/*f*/--w:72">Work Sans</span>
<div class="abs" style="left:749px;top:766.5px;width:117.5px;height:39px;border-radius:7px;background:#eff6ff;box-shadow:0 0 0 2px #0a5cff"></div>
<span class="t" style="left:761px;top:785.5px;font-size:14.5px;font-weight:bold;color:#0047d6;letter-spacing:-0.35px;/*f*/--w:49">Lexend</span>
<div class="abs" style="left:880px;top:766.5px;width:117.5px;height:39px;border-radius:8px;background:#f8fafc"></div>
<span class="t m2" style="left:892px;top:785.5px;font-size:14.5px;color:#374151;letter-spacing:-0.12px;/*f*/--w:92">Space Grote...</span>
<div class="abs" style="left:1009.5px;top:766.5px;width:117.5px;height:39px;border-radius:8px;background:#f8fafc"></div>
<span class="t m2" style="left:1021.5px;top:785.5px;font-size:14.5px;color:#374151;letter-spacing:-0.19px;/*f*/--w:44">Figtree</span>
<div class="abs" style="left:749px;top:818.5px;width:117.5px;height:39px;border-radius:8px;background:#f8fafc"></div>
<span class="t" style="left:761px;top:837.5px;font-size:14.5px;font-weight:bold;color:#374151;letter-spacing:-0.08px;/*f*/--w:32">Sora</span>
<div class="abs" style="left:880px;top:818.5px;width:117.5px;height:39px;border-radius:8px;background:#f8fafc"></div>
<span class="t m2" style="left:892px;top:837.5px;font-size:14.5px;color:#374151;letter-spacing:-0.2px;/*f*/--w:73">Albert Sans</span>
<div class="abs" style="left:1009.5px;top:818.5px;width:117.5px;height:39px;border-radius:8px;background:#f8fafc"></div>
<span class="t m2" style="left:1021.5px;top:837.5px;font-size:14.5px;color:#374151;letter-spacing:-0.29px;/*f*/--w:52">Urbanist</span>
<span class="t" style="left:843.5px;top:895px;font-size:12px;color:#9ca3af;letter-spacing:0.38px;/*f*/--w:188">Click colors or fonts to customize</span>
<div class="abs" style="left:773px;top:926px;width:176px;height:53px;border-radius:27px;background:rgba(255,255,255,.86);border:1px solid #e9ebee;box-shadow:0 4px 10px rgba(0,0,0,.09)"></div>
<div class="abs" style="left:789px;top:937px;width:32px;height:32px;border-radius:50%;background:radial-gradient(circle at 28% 62%,#2f3842 0 4px,rgba(0,0,0,0) 5px),linear-gradient(140deg,#2e9ad6 0 38%,#5fb0dd 38% 50%,#d5e4ee 50% 70%,#9aa4ab 70%)"></div>
<span class="t" style="left:833.5px;top:943px;font-size:12px;color:#9ca3af;letter-spacing:0.3px;/*f*/--w:71">Your Theme:</span>
<span class="t m" style="left:833.5px;top:960.3px;font-size:15px;color:#1f2937;letter-spacing:-0.03px;/*f*/--w:49">Jakarta</span>
<svg class="ic" style="left:917px;top:944.5px;color:#6b7280;stroke-width:2" width="16" height="16" viewBox="0 0 24 24"><path d="M18 15l-6-6-6 6"/></svg>
<div class="abs" style="left:960px;top:924px;width:190px;height:58px;border-radius:29px;background:rgba(255,255,255,.86);border:2px solid #1463f0;box-shadow:0 4px 12px rgba(0,85,255,.14)"></div>
<div class="abs" style="left:978.5px;top:943px;width:20px;height:20px;border-radius:50%;background:#eef0f2"></div>
<div class="abs" style="left:993px;top:943px;width:20px;height:20px;border-radius:50%;background:#0055ff"></div>
<div class="abs" style="left:1005px;top:941px;width:24px;height:24px;border-radius:50%;background:#0044d6;border:2px solid #fcfcfd"></div>
<span class="t" style="left:1039.5px;top:943px;font-size:12px;color:#9ca3af;letter-spacing:0.33px;/*f*/--w:63">Customize:</span>
<span class="t m" style="left:1039.5px;top:960.3px;font-size:15px;color:#1f2937;letter-spacing:-0.09px;/*f*/--w:33">Style</span>
<svg class="ic" style="left:1115px;top:945.5px;color:#6b7280;stroke-width:2" width="16" height="16" viewBox="0 0 24 24"><path d="M6 9l6 6 6-6"/></svg>
</div>
<!--OVE-->
</div>

<!-- ================= RIGHT PANEL ================= -->
<div id="right">
<!--RS-->
<div class="abs" style="left:-1633px;top:-131px;width:1920px;height:991px">
<div class="abs" style="left:1633px;top:131px;width:287px;height:69px;background:#f9fafb;border-bottom:1px solid #e5e7eb"></div>
<svg class="ic" style="left:1646px;top:146px;color:#f97316;stroke-width:2.2" width="14" height="14" viewBox="0 0 24 24"><path d="M12 3H5a2 2 0 0 0-2 2v14a2 2 0 0 0 2 2h14a2 2 0 0 0 2-2v-7"/><path d="M18.4 2.6a2.1 2.1 0 0 1 3 3L12 15l-4 1 1-4z"/></svg>
<span class="t" style="left:1669px;top:152.3px;font-size:15px;font-weight:bold;color:#1f2937;letter-spacing:-0.47px;/*f*/--w:70">Properties</span>
<div class="abs" style="left:1645px;top:167px;width:55px;height:19px;border-radius:4px;background:#e5e7eb"></div>
<span class="t mono" style="left:1651px;top:176.5px;font-size:12px;color:#4b5563;letter-spacing:-0.04px;/*f*/--w:43">&lt;span&gt;</span>
<span class="t lab m2" style="left:1645.5px;top:220px;letter-spacing:0.51px;/*f*/--w:73">Text Content</span>
<div class="abs" style="left:1645px;top:234px;width:263px;height:54px;border-radius:7px;border:1px solid #e5e7eb;background:#fff"></div>
<span class="t" style="left:1654px;top:251px;font-size:14.5px;color:#111;letter-spacing:0.1px;/*f*/--w:129">Create New Course</span>
<span class="t lab m2" style="left:1645px;top:318px;letter-spacing:0.46px;/*f*/--w:37">Colors</span>
<span class="t lab2" style="left:1645px;top:342px;letter-spacing:0.66px;/*f*/--w:24">Text</span>
<span class="t lab2" style="left:1781px;top:342px;letter-spacing:0.33px;/*f*/--w:67">Background</span>
<div class="abs" style="left:1685px;top:357px;width:170px;height:26px;border-radius:5px;border:1px solid #e5e7eb;background:#fff"></div>
<div class="abs" style="left:1645px;top:354px;width:32px;height:32px;border-radius:5px;border:1px solid #e5e7eb;background:#fff"></div>
<span class="t" style="left:1694px;top:369.5px;font-size:12.5px;color:#1f2937;letter-spacing:-0.46px;/*f*/--w:50">#FFFFFF</span>
<div class="abs" style="left:1821px;top:359px;width:120px;height:26px;border-radius:5px;border:1px solid #e5e7eb;background:transparent"></div>
<div class="abs" style="left:1781px;top:354px;width:32px;height:34px;border-radius:5px;border:1px solid #e5e7eb;background-color:#fff;background-image:conic-gradient(#cfcfcf 25%,#fff 0 50%,#cfcfcf 0 75%,#fff 0);background-size:8px 8px"></div>
<span class="t mono" style="left:1830px;top:371.7px;font-size:12px;font-style:italic;color:#9ca3af;letter-spacing:-0.12px;/*f*/--w:78">transparent</span>
<span class="t lab m2" style="left:1645px;top:413px;letter-spacing:0.59px;/*f*/--w:68">Typography</span>
<span class="t lab2" style="left:1645px;top:437px;letter-spacing:0.22px;/*f*/--w:24">Size</span>
<span class="t lab2" style="left:1781px;top:437px;letter-spacing:0.37px;/*f*/--w:39">Weight</span>
<div class="abs sb" style="left:1645px;top:451px;width:24px;height:24px"></div>
<svg class="ic" style="left:1651px;top:457px;color:#374151;stroke-width:3" width="12" height="12" viewBox="0 0 24 24"><path d="M4 12h16"/></svg>
<div class="abs sb" style="left:1673px;top:449px;width:72px;height:27px"></div>
<span class="t" style="left:1682px;top:463px;font-size:13.3px;color:#111;letter-spacing:-0.95px;/*f*/--w:26">16px</span>
<svg class="ic" style="left:1730px;top:457px;color:#111;stroke-width:4" width="12" height="12" viewBox="0 0 24 24"><path d="M5 8l7 8 7-8"/></svg>
<div class="abs sb" style="left:1750px;top:451px;width:23px;height:24px"></div>
<svg class="ic" style="left:1755px;top:457px;color:#374151;stroke-width:3" width="12" height="12" viewBox="0 0 24 24"><path d="M4 12h16M12 4v16"/></svg>
<div class="abs sb" style="left:1781px;top:449px;width:127px;height:27px"></div>
<span class="t" style="left:1793.5px;top:463px;font-size:13.3px;color:#111;letter-spacing:-0.54px;/*f*/--w:25">Bold</span>
<svg class="ic" style="left:1893px;top:457px;color:#111;stroke-width:4" width="12" height="12" viewBox="0 0 24 24"><path d="M5 8l7 8 7-8"/></svg>
<div class="abs" style="left:1645px;top:492px;width:263px;height:1px;background:#f3f4f6"></div>
<div class="abs" style="left:1633px;top:500px;width:287px;height:1px;background:#e5e7eb"></div>
<svg class="ic" style="left:1646px;top:520px;color:#4b5563;stroke-width:2.2" width="14" height="14" viewBox="0 0 24 24"><rect x="3" y="3" width="18" height="7" rx="1"/><rect x="3" y="14" width="9" height="7" rx="1"/><rect x="16" y="14" width="5" height="7" rx="1"/></svg>
<span class="t" style="left:1669px;top:527.5px;font-size:16px;font-weight:bold;color:#1f2937;letter-spacing:-0.12px;/*f*/--w:51">Layers</span>
<svg class="ic" style="left:1884px;top:518px;color:#4b5563;stroke-width:2" width="19" height="19" viewBox="0 0 24 24"><path d="M18 6L6 18M6 6l12 12"/></svg>
<div class="abs" style="left:1645px;top:553px;width:263px;height:34px;border-radius:8px;border:1px solid #e5e7eb;background:#fff"></div>
<svg class="ic" style="left:1656px;top:563px;color:#9ca3af;stroke-width:2" width="14" height="14" viewBox="0 0 24 24"><circle cx="11" cy="11" r="8"/><path d="M21 21l-4.3-4.3"/></svg>
<span class="t" style="left:1678.5px;top:569.7px;font-size:14.5px;color:#6b7280;letter-spacing:0.06px;/*f*/--w:122">Search elements...</span>
<span class="t" style="left:1679px;top:606.7px;font-size:12px;color:#374151;letter-spacing:0.25px;/*f*/--w:59">Expand All</span>
<span class="t" style="left:1811px;top:606.7px;font-size:12px;color:#374151;letter-spacing:0.3px;/*f*/--w:66">Collapse All</span>
<div class="abs" style="left:1633px;top:631px;width:287px;height:1px;background:#e5e7eb"></div>
<svg class="ic" style="left:1674px;top:637.7px;color:#9ca3af;stroke-width:1.9" width="14" height="14" viewBox="0 0 24 24"><path d="M9 18l6-6-6-6"/></svg>
<svg class="ic" style="left:1693px;top:636.7px;color:#4b93ea;stroke-width:2.1" width="16" height="16" viewBox="0 0 24 24"><rect x="3" y="3" width="18" height="18" rx="2.5"/></svg>
<span class="t mono" style="left:1713.3px;top:645.2px;font-size:12.5px;color:#374151;letter-spacing:-0.61px;/*f*/--w:21.3">div</span>
<span class="t" style="left:1739.1px;top:644.8px;font-size:12px;color:#9ca3af;letter-spacing:0.44px;/*f*/--w:36">.sticky</span>
<svg class="ic" style="left:1674px;top:661.7px;color:#9ca3af;stroke-width:1.9" width="14" height="14" viewBox="0 0 24 24"><path d="M6 9l6 6 6-6"/></svg>
<svg class="ic" style="left:1693px;top:660.7px;color:#4b93ea;stroke-width:2.1" width="16" height="16" viewBox="0 0 24 24"><rect x="3" y="3" width="18" height="18" rx="2.5"/></svg>
<span class="t mono" style="left:1713.3px;top:669.2px;font-size:12.5px;color:#374151;letter-spacing:-0.61px;/*f*/--w:21.3">div</span>
<span class="t" style="left:1739.1px;top:668.8px;font-size:12px;color:#9ca3af;letter-spacing:0.39px;/*f*/--w:35">.flex-1</span>
<svg class="ic" style="left:1690px;top:685.7px;color:#9ca3af;stroke-width:1.9" width="14" height="14" viewBox="0 0 24 24"><path d="M6 9l6 6 6-6"/></svg>
<svg class="ic" style="left:1709px;top:684.7px;color:#4b93ea;stroke-width:2.1" width="16" height="16" viewBox="0 0 24 24"><rect x="3" y="3" width="18" height="18" rx="2.5"/></svg>
<span class="t mono" style="left:1729.3px;top:693.2px;font-size:12.5px;color:#374151;letter-spacing:-0.61px;/*f*/--w:21.3">div</span>
<span class="t" style="left:1755.1px;top:692.8px;font-size:12px;color:#9ca3af;letter-spacing:0.25px;/*f*/--w:23">.flex</span>
<svg class="ic" style="left:1706px;top:709.7px;color:#9ca3af;stroke-width:1.9" width="14" height="14" viewBox="0 0 24 24"><path d="M9 18l6-6-6-6"/></svg>
<svg class="ic" style="left:1725px;top:708.7px;color:#4b93ea;stroke-width:2.1" width="16" height="16" viewBox="0 0 24 24"><rect x="3" y="3" width="18" height="18" rx="2.5"/></svg>
<span class="t mono" style="left:1745.3px;top:717.2px;font-size:12.5px;color:#374151;letter-spacing:-0.61px;/*f*/--w:21.3">div</span>
<svg class="ic" style="left:1706px;top:733.7px;color:#9ca3af;stroke-width:1.9" width="14" height="14" viewBox="0 0 24 24"><path d="M6 9l6 6 6-6"/></svg>
<svg class="ic" style="left:1726px;top:733.7px;color:#34c38f;stroke-width:2.6" width="14" height="14" viewBox="0 0 24 24"><rect x="2" y="8" width="20" height="9" rx="4.5"/></svg>
<span class="t mono" style="left:1745.3px;top:741.2px;font-size:12.5px;color:#374151;letter-spacing:-0.48px;/*f*/--w:42.6">button</span>
<span class="t" style="left:1792.4px;top:740.8px;font-size:12px;color:#9ca3af;letter-spacing:0.25px;/*f*/--w:23">.flex</span>
<svg class="ic" style="left:1742px;top:757.7px;color:#8b5cf6;stroke-width:2" width="14" height="14" viewBox="0 0 24 24"><path d="M11.937 15.5A2 2 0 0 0 10.5 14.063l-5.135-1.582a.5.5 0 0 1 0-.962L10.500 9.936A2 2 0 0 0 11.937 8.500l1.582-5.135a.5.5 0 0 1 .963 0L16.063 8.500A2 2 0 0 0 17.500 9.937l5.135 1.581a.5.5 0 0 1 0 .964L17.500 14.063a2 2 0 0 0-1.437 1.437l-1.582 5.135a.5.5 0 0 1-.963 0z"/><path d="M4 2v4M2 4h4"/><circle cx="4" cy="20" r="1.500"/></svg>
<span class="t mono" style="left:1761.3px;top:765.2px;font-size:12.5px;color:#374151;letter-spacing:-0.42px;/*f*/--w:7.1">i</span>
<span class="t" style="left:1772.9px;top:764.8px;font-size:12px;color:#9ca3af;letter-spacing:0.44px;/*f*/--w:38">.size-5</span>
<div class="abs" style="left:1633px;top:776.2px;width:287px;height:26px;border-radius:6px;background:#fed7aa;border:1px solid #fb9a4b"></div>
<svg class="ic" style="left:1742px;top:781.7px;color:#78716c;stroke-width:2.4" width="14" height="14" viewBox="0 0 24 24"><path d="M3 5h18M3 10h18M3 15h18M3 20h18"/></svg>
<span class="t mono" style="left:1761.3px;top:789.2px;font-size:12.5px;color:#374151;letter-spacing:-0.54px;/*f*/--w:28.4">span</span>
<span class="t" style="left:1794.2px;top:788.8px;font-size:12px;color:#9ca3af;letter-spacing:0.29px;/*f*/--w:110">Create New Course</span>
<svg class="ic" style="left:1690px;top:805.7px;color:#9ca3af;stroke-width:1.9" width="14" height="14" viewBox="0 0 24 24"><path d="M9 18l6-6-6-6"/></svg>
<svg class="ic" style="left:1709px;top:804.7px;color:#4b93ea;stroke-width:2.1" width="16" height="16" viewBox="0 0 24 24"><rect x="3" y="3" width="18" height="18" rx="2.5"/></svg>
<span class="t mono" style="left:1729.3px;top:813.2px;font-size:12.5px;color:#374151;letter-spacing:-0.61px;/*f*/--w:21.3">div</span>
<span class="t" style="left:1755.1px;top:812.8px;font-size:12px;color:#9ca3af;letter-spacing:0.16px;/*f*/--w:24">.grid</span>
<svg class="ic" style="left:1690px;top:829.7px;color:#9ca3af;stroke-width:1.9" width="14" height="14" viewBox="0 0 24 24"><path d="M9 18l6-6-6-6"/></svg>
<svg class="ic" style="left:1709px;top:828.7px;color:#4b93ea;stroke-width:2.1" width="16" height="16" viewBox="0 0 24 24"><rect x="3" y="3" width="18" height="18" rx="2.5"/></svg>
<span class="t mono" style="left:1729.3px;top:837.2px;font-size:12.5px;color:#374151;letter-spacing:-0.61px;/*f*/--w:21.3">div</span>
<span class="t" style="left:1755.1px;top:836.8px;font-size:12px;color:#9ca3af;letter-spacing:0.25px;/*f*/--w:23">.flex</span>
<svg class="ic" style="left:1690px;top:853.7px;color:#9ca3af;stroke-width:1.9" width="14" height="14" viewBox="0 0 24 24"><path d="M9 18l6-6-6-6"/></svg>
<svg class="ic" style="left:1709px;top:852.7px;color:#4b93ea;stroke-width:2.1" width="16" height="16" viewBox="0 0 24 24"><rect x="3" y="3" width="18" height="18" rx="2.5"/></svg>
<span class="t mono" style="left:1729.3px;top:861.2px;font-size:12.5px;color:#374151;letter-spacing:-0.61px;/*f*/--w:21.3">div</span>
<span class="t" style="left:1755.1px;top:860.8px;font-size:12px;color:#9ca3af;letter-spacing:0.66px;/*f*/--w:54">.bg-white</span>
<svg class="ic" style="left:1642px;top:877.7px;color:#9ca3af;stroke-width:1.9" width="14" height="14" viewBox="0 0 24 24"><path d="M6 9l6 6 6-6"/></svg>
<svg class="ic" style="left:1661px;top:876.7px;color:#4b93ea;stroke-width:2.1" width="16" height="16" viewBox="0 0 24 24"><rect x="3" y="3" width="18" height="18" rx="2.5"/></svg>
<span class="t mono" style="left:1681.3px;top:885.2px;font-size:12.5px;color:#374151;letter-spacing:-0.61px;/*f*/--w:21.3">div</span>
<span class="t" style="left:1707.1px;top:884.8px;font-size:12px;color:#9ca3af;letter-spacing:0.47px;/*f*/--w:85">#search-modal</span>
<svg class="ic" style="left:1658px;top:901.7px;color:#9ca3af;stroke-width:1.9" width="14" height="14" viewBox="0 0 24 24"><path d="M9 18l6-6-6-6"/></svg>
<svg class="ic" style="left:1677px;top:900.7px;color:#4b93ea;stroke-width:2.1" width="16" height="16" viewBox="0 0 24 24"><rect x="3" y="3" width="18" height="18" rx="2.5"/></svg>
<span class="t mono" style="left:1697.3px;top:909.2px;font-size:12.5px;color:#374151;letter-spacing:-0.61px;/*f*/--w:21.3">div</span>
<span class="t" style="left:1723.1px;top:908.8px;font-size:12px;color:#9ca3af;letter-spacing:0.66px;/*f*/--w:54">.bg-white</span>
<svg class="ic" style="left:1642px;top:925.7px;color:#9ca3af;stroke-width:1.9" width="14" height="14" viewBox="0 0 24 24"><path d="M6 9l6 6 6-6"/></svg>
<svg class="ic" style="left:1661px;top:924.7px;color:#4b93ea;stroke-width:2.1" width="16" height="16" viewBox="0 0 24 24"><rect x="3" y="3" width="18" height="18" rx="2.5"/></svg>
<span class="t mono" style="left:1681.3px;top:933.2px;font-size:12.5px;color:#374151;letter-spacing:-0.61px;/*f*/--w:21.3">div</span>
<span class="t" style="left:1707.1px;top:932.8px;font-size:12px;color:#9ca3af;letter-spacing:0.39px;/*f*/--w:77">#createModal</span>
<svg class="ic" style="left:1658px;top:949.7px;color:#9ca3af;stroke-width:1.9" width="14" height="14" viewBox="0 0 24 24"><path d="M9 18l6-6-6-6"/></svg>
<svg class="ic" style="left:1677px;top:948.7px;color:#4b93ea;stroke-width:2.1" width="16" height="16" viewBox="0 0 24 24"><rect x="3" y="3" width="18" height="18" rx="2.5"/></svg>
<span class="t mono" style="left:1697.3px;top:957.2px;font-size:12.5px;color:#374151;letter-spacing:-0.61px;/*f*/--w:21.3">div</span>
<span class="t" style="left:1723.1px;top:956.8px;font-size:12px;color:#9ca3af;letter-spacing:0.66px;/*f*/--w:54">.bg-white</span>
<div class="abs" style="left:1633px;top:963px;width:287px;height:28px;background:#fff;border-top:1px solid #e5e7eb"></div>
<span class="t" style="left:1739px;top:980px;font-size:12px;color:#9ca3af;letter-spacing:0.27px;/*f*/--w:75">224 elements</span>
</div>
<!--RE-->
</div>
</body>
</html>
